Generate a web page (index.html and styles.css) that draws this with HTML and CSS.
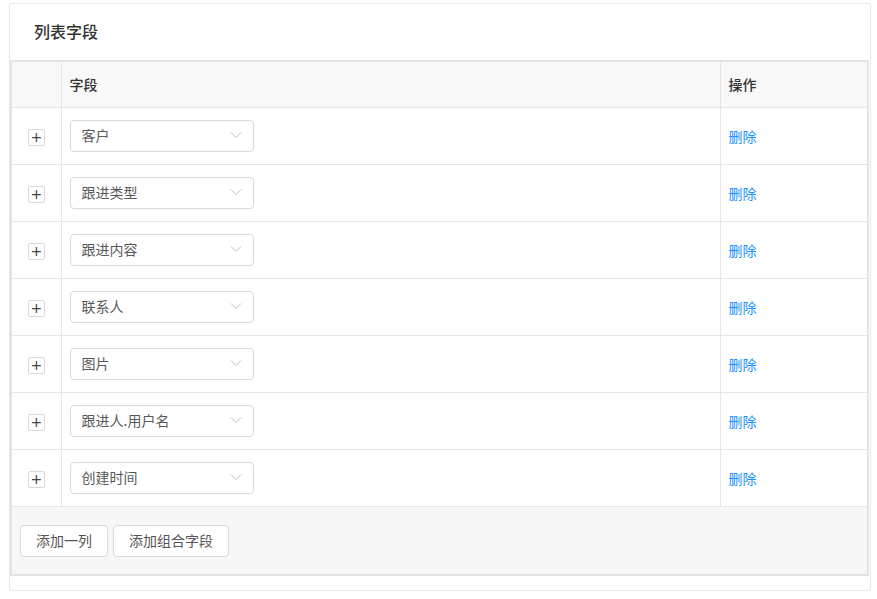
FILE: index.html
```html
<!DOCTYPE html>
<html lang="zh">
<head>
<meta charset="utf-8">
<link rel="stylesheet" href="styles.css">
</head>
<body>
<div class="card">
  <div class="card-title">列表字段</div>
  <div class="table-wrap">
    <table class="grid">
      <colgroup><col class="c1"><col class="c2"><col class="c3"></colgroup>
      <thead>
        <tr><th></th><th>字段</th><th>操作</th></tr>
      </thead>
      <tbody>
        <tr><td class="exp"><span class="plus">+</span></td><td><div class="select"><span>客户</span><svg class="arrow" viewBox="0 0 12 8" width="12" height="8"><path d="M1 1.5 L6 6.5 L11 1.5" fill="none" stroke="#c0c0c0" stroke-width="1"/></svg></div></td><td><a class="link">删除</a></td></tr>
        <tr><td class="exp"><span class="plus">+</span></td><td><div class="select"><span>跟进类型</span><svg class="arrow" viewBox="0 0 12 8" width="12" height="8"><path d="M1 1.5 L6 6.5 L11 1.5" fill="none" stroke="#c0c0c0" stroke-width="1"/></svg></div></td><td><a class="link">删除</a></td></tr>
        <tr><td class="exp"><span class="plus">+</span></td><td><div class="select"><span>跟进内容</span><svg class="arrow" viewBox="0 0 12 8" width="12" height="8"><path d="M1 1.5 L6 6.5 L11 1.5" fill="none" stroke="#c0c0c0" stroke-width="1"/></svg></div></td><td><a class="link">删除</a></td></tr>
        <tr><td class="exp"><span class="plus">+</span></td><td><div class="select"><span>联系人</span><svg class="arrow" viewBox="0 0 12 8" width="12" height="8"><path d="M1 1.5 L6 6.5 L11 1.5" fill="none" stroke="#c0c0c0" stroke-width="1"/></svg></div></td><td><a class="link">删除</a></td></tr>
        <tr><td class="exp"><span class="plus">+</span></td><td><div class="select"><span>图片</span><svg class="arrow" viewBox="0 0 12 8" width="12" height="8"><path d="M1 1.5 L6 6.5 L11 1.5" fill="none" stroke="#c0c0c0" stroke-width="1"/></svg></div></td><td><a class="link">删除</a></td></tr>
        <tr><td class="exp"><span class="plus">+</span></td><td><div class="select"><span>跟进人.用户名</span><svg class="arrow" viewBox="0 0 12 8" width="12" height="8"><path d="M1 1.5 L6 6.5 L11 1.5" fill="none" stroke="#c0c0c0" stroke-width="1"/></svg></div></td><td><a class="link">删除</a></td></tr>
        <tr><td class="exp"><span class="plus">+</span></td><td><div class="select"><span>创建时间</span><svg class="arrow" viewBox="0 0 12 8" width="12" height="8"><path d="M1 1.5 L6 6.5 L11 1.5" fill="none" stroke="#c0c0c0" stroke-width="1"/></svg></div></td><td><a class="link">删除</a></td></tr>
      </tbody>
    </table>
    <div class="footer">
      <button class="btn">添加一列</button>
      <button class="btn">添加组合字段</button>
    </div>
  </div>
</div>
</body>
</html>
```
FILE: styles.css
```css
* { box-sizing: border-box; }
html, body { margin: 0; padding: 0; background: #fff; }
body {
  font-family: "Noto Sans CJK SC", "Noto Sans", sans-serif;
  font-size: 14px;
  color: #333;
}
.card {
  margin: 3px 0 0 9px;
  width: 862px;
  height: 588px;
  border: 1px solid #e8e8e8;
  border-radius: 2px;
  display: flex;
  flex-direction: column;
}
.card-title {
  height: 56px;
  padding-left: 24px;
  display: flex;
  align-items: center;
  font-size: 16px;
  font-weight: 500;
  color: #333;
  padding-bottom: 2px;
}
.table-wrap {
  width: 859px;
  border: 2px solid #e3e3e3;
  background: #f7f7f7;
}
.grid {
  width: 100%;
  border-collapse: collapse;
  table-layout: fixed;
  background: #fff;
}
.c1 { width: 49px; }
.c3 { width: 147px; }
.grid th, .grid td {
  border-right: 1px solid #e6e6e6;
  border-bottom: 1px solid #e6e6e6;
  padding: 0 8px;
  text-align: left;
}
.grid th:last-child, .grid td:last-child { border-right: none; }
.grid th {
  height: 45px;
  background: #f8f8f8;
  font-weight: 500;
  color: #333;
  font-size: 14px;
}
.grid td { height: 57px; }
.grid td.exp { text-align: center; padding: 0; }
.plus {
  display: inline-flex;
  width: 17px;
  height: 17px;
  border: 1px solid #d9d9d9;
  border-radius: 2px;
  align-items: center;
  justify-content: center;
  font-size: 14px;
  line-height: 1;
  color: #444;
  font-family: "DejaVu Sans", sans-serif;
  vertical-align: middle;
}
.select {
  width: 184px;
  height: 32px;
  border: 1px solid #d9d9d9;
  border-radius: 4px;
  display: flex;
  align-items: center;
  justify-content: space-between;
  padding: 0 11px 1px 11px;
  color: #595959;
  background: #fff;
}
.arrow { display: block; margin-top: -1px; }
.link { color: #1890ff; cursor: pointer; }
.footer {
  height: 67px;
  padding: 18px 8px 0;
  display: flex;
  gap: 5px;
  align-items: flex-start;
}
.btn {
  height: 32px;
  padding: 0 15px 1px;
  border: 1px solid #d9d9d9;
  border-radius: 4px;
  background: #fff;
  font-family: "Noto Sans CJK SC", sans-serif;
  font-size: 14px;
  color: #555;
}
```
